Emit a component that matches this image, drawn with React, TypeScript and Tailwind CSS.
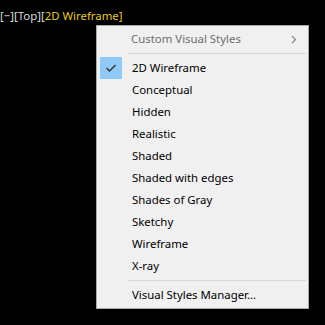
import React from 'react';

const styles = [
  "2D Wireframe",
  "Conceptual",
  "Hidden",
  "Realistic",
  "Shaded",
  "Shaded with edges",
  "Shades of Gray",
  "Sketchy",
  "Wireframe",
  "X-ray",
];

function Item({ label, checked }: { label: string; checked?: boolean }) {
  return (
    <div className="relative flex h-[22px] items-center pl-[35px] text-[11.4px] text-black">
      {checked && (
        <div className="absolute left-[3px] top-0 flex h-[22px] w-[22px] items-center justify-center bg-[#90c8f6]">
          <svg width="12" height="10" viewBox="0 0 12 10">
            <path d="M1.5 5 L4.5 8 L10.5 2" fill="none" stroke="#333" strokeWidth="1.4" />
          </svg>
        </div>
      )}
      <span>{label}</span>
    </div>
  );
}

function Separator() {
  return (
    <div className="flex h-[7px] items-center pl-[31px] pr-[2px]">
      <div className="h-px w-full bg-[#d7d7d7]" />
    </div>
  );
}

export default function App() {
  return (
    <div className="relative h-[325px] w-[325px] overflow-hidden bg-black font-['Noto_Sans',sans-serif]">
      <div className="pt-[7px] text-[11.4px] leading-[18px] text-[#dcdcdc]">
        [−][Top][<span className="text-[#e8c81c]">2D Wireframe]</span>
      </div>

      {/* popup menu */}
      <div className="absolute left-[96px] top-[25px] w-[213px] border border-[#a8a8a8] bg-[#f0f0f0] py-[2px]">
        <div className="flex h-[22px] items-center justify-between pl-[34px] pr-[11px] text-[11.4px] text-[#6d6d6d]">
          <span>Custom Visual Styles</span>
          <svg width="6" height="9" viewBox="0 0 6 9">
            <path d="M1 1 L4.5 4.5 L1 8" fill="none" stroke="#888" strokeWidth="1.2" />
          </svg>
        </div>
        <Separator />
        {styles.map((s, i) => (
          <Item key={s} label={s} checked={i === 0} />
        ))}
        <Separator />
        <Item label="Visual Styles Manager..." />
      </div>
    </div>
  );
}
